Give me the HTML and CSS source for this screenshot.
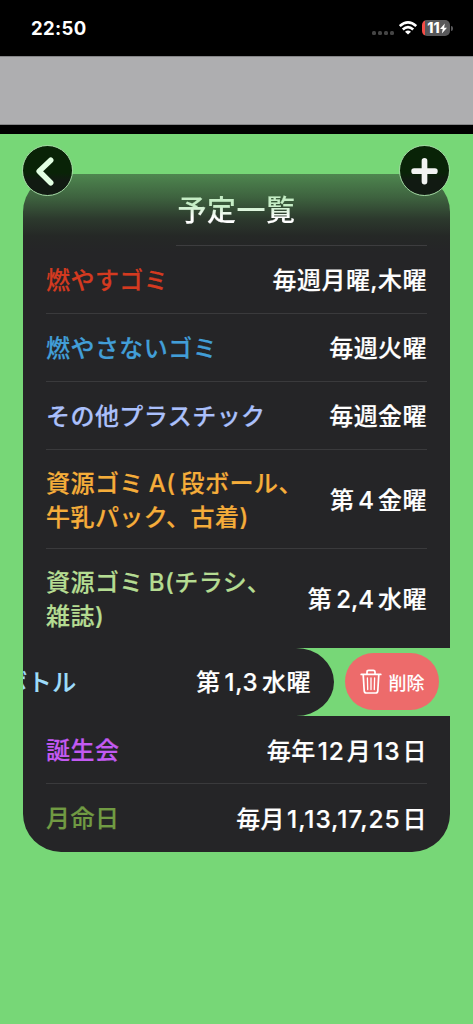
FILE: index.html
```html
<!DOCTYPE html>
<html lang="ja">
<head>
<meta charset="utf-8">
<title>予定一覧</title>
<link rel="stylesheet" href="styles.css">
</head>
<body>
<div class="screen">
  <header class="status">
    <span class="clock">22:50</span>
    <div class="indicators">
      <div class="cell"><i></i><i></i><i></i><i></i></div>
      <svg class="wifi" width="18" height="14" viewBox="0 0 18 14" fill="none" stroke="#fff" stroke-width="2.6"><path d="M.8 5.100Q9-2.300 17.200 5.100"/><path d="M3.800 8.500Q9 3.700 14.200 8.500"/><path d="M9 13.600L6 10.700Q9 8.200 12 10.700Z" fill="#fff" stroke="none"/></svg>
      <div class="battery"><span>11</span><svg width="7" height="11" viewBox="0 0 7 10" fill="#fff"><path d="M4.800 0L0 5.600h2.700L1.900 10 7 4.200H4.100z"/></svg></div>
      <i class="cap"></i>
    </div>
  </header>
  <div class="banner"></div>
  <main class="page">
    <section class="card">
      <h1 class="title"><span>予定一覧</span></h1>
      <div class="row"><span class="name red">燃やすゴミ</span><span class="when">毎週月曜,木曜</span></div>
      <div class="row"><span class="name blue">燃やさないゴミ</span><span class="when">毎週火曜</span></div>
      <div class="row"><span class="name lavender">その他プラスチック</span><span class="when">毎週金曜</span></div>
      <div class="row tall"><span class="name orange">資源ゴミ<b class="gap">A(</b><b class="gap"></b>段ボール、<br>牛乳パック、古着<b>)</b></span><span class="when">第<b class="num">4</b>金曜</span></div>
      <div class="row tall last"><span class="name lime">資源ゴミ<b class="gap">B(</b>チラシ、<br>雑誌<b>)</b></span><span class="when">第<b class="num">2,4</b>水曜</span></div>
      <div class="swipe">
        <div class="row moved"><span class="name sky">ペットボトル</span><span class="when">第<b class="num">1,3</b>水曜</span></div>
        <button class="delete"><svg width="22" height="26" viewBox="0 0 22 26" fill="none" stroke="#fff" stroke-width="1.700" stroke-linecap="round" stroke-linejoin="round"><path d="M1.200 5.400h19.600M7 5V3Q7 1.300 8.700 1.300h4.600Q15 1.300 15 3v2M3.200 5.600l1 16.200Q4.400 24 6.400 24h9.200q2 0 2.200-2.200l1-16.200"/><path d="M7.400 9l.3 11.500M11 9v11.500M14.600 9l-.3 11.500" stroke-width="1.300"/></svg><span>削除</span></button>
      </div>
      <div class="row"><span class="name purple">誕生会</span><span class="when">毎年<b class="tight">12</b>月<b class="tight">13</b>日</span></div>
      <div class="row last"><span class="name olive">月命日</span><span class="when">毎月<b class="tight">1,13,17,25</b>日</span></div>
    </section>
    <button class="round back" aria-label="戻る"><svg width="50" height="50" viewBox="0 0 50 50" fill="none" stroke="#e2ffe2" stroke-width="5.600" stroke-linecap="round" stroke-linejoin="round"><path d="M28.300 14L16.500 25.200 28.300 37"/></svg></button>
    <button class="round add" aria-label="追加"><svg width="50" height="50" viewBox="0 0 50 50" fill="none" stroke="#f1f3f1" stroke-width="5.800" stroke-linecap="round"><path d="M25 14.600v21.200M14.400 25.200h21.200"/></svg></button>
  </main>
</div>
</body>
</html>
```
FILE: styles.css
```css
* { box-sizing: border-box; }
body { margin: 0; font-family: Inter, "Noto Sans CJK JP", sans-serif; background: #000; }
button { border: 0; padding: 0; margin: 0; font: inherit; color: #fff; }
.screen { width: 473px; height: 1024px; display: flex; flex-direction: column; overflow: hidden; }
.status { height: 56px; flex: none; display: flex; justify-content: space-between; align-items: flex-start; padding: 18px 20px 0 31px; color: #fff; }
.clock { font-size: 18.500px; line-height: 21px; font-weight: 700; letter-spacing: .35px; }
.indicators { display: flex; align-items: center; height: 20px; }
.cell { display: flex; gap: 2px; padding-top: 9px; margin-right: 5px; }
.cell i { width: 4px; height: 4px; border-radius: 1.500px; background: #454545; }
.wifi { margin-right: 5px; }
.battery { width: 28px; height: 16px; border-radius: 5px; background: linear-gradient(90deg, #f34c46 3px, #58585a 3px); display: flex; align-items: center; justify-content: center; padding-left: 2px; color: #fff; font-size: 14px; font-weight: 800; line-height: 16px; }
.cap { width: 2px; height: 5px; margin-left: 1px; border-radius: 0 2px 2px 0; background: #58585a; }
.banner { height: 69px; flex: none; background: #aeaeb0; border-top: 1px solid #858587; border-bottom: 1px solid #858587; }
.page { flex: 1; margin-top: 9px; background: #77d777; padding: 40px 23px 0; position: relative; }
.card { width: 427px; border-radius: 38px; background: linear-gradient(#4e864f 0, #3e633f 23px, #2c392d 45px, #252826 62px, #252527 78px); overflow: hidden; }
.title { margin: 0; height: 72px; position: relative; text-align: center; font-size: 29px; line-height: 74px; font-weight: 500; letter-spacing: .5px; }
.title span { background: linear-gradient(#c5edc5 35%, #fff 70%); background-clip: text; -webkit-background-clip: text; color: transparent; -webkit-text-stroke: .2px transparent; }
.title::after { content: ""; position: absolute; left: 153px; right: 23px; bottom: 0; height: 1px; background: #3d3d3f; }
.row { height: 68px; margin: 0 23px; padding-top: 3px; display: flex; align-items: center; justify-content: space-between; border-bottom: 1px solid #3a3a3c; color: #fff; font-size: 24px; line-height: 34px; font-weight: 500; letter-spacing: .45px; white-space: nowrap; -webkit-text-stroke: .2px; }
.row b { font-weight: 500; }
.tall { height: 99px; padding-top: 4px; }
.last { border-color: transparent; }
.gap { margin-left: 5px; }
.num { margin: 0 4px; letter-spacing: 0; }
.moved .num { letter-spacing: .6px; }
.row .tight { margin: 0 2px; font-size: 24.500px; letter-spacing: .9px; }
.swipe { height: 68px; background: #77d777; display: flex; align-items: center; }
.moved { flex: none; width: 427px; margin: 0 11px 0 -116px; padding: 2px 23px 0; border: 0; background: #252527; border-radius: 0 38px 38px 0 / 0 34px 34px 0; }
.delete { width: 94px; height: 57px; flex: none; margin-bottom: 1px; border-radius: 29px; background: #ed6b6b; display: flex; align-items: center; justify-content: center; gap: 7px; font-size: 18px; font-weight: 500; }
.red { color: #d43a20; }
.blue { color: #429ed7; }
.lavender { color: #abc0fb; }
.orange { color: #f5ad3a; }
.lime { color: #b5dc92; }
.sky { color: #9edcfa; }
.purple { color: #c35af2; }
.olive { color: #719b43; }
.round { position: absolute; top: 11px; width: 51px; height: 51px; border-radius: 50%; border: 1px solid #a3d7a3; background: linear-gradient(#092307 55%, #111a12 70%); display: flex; align-items: center; justify-content: center; }
.back { left: 22px; }
.add { right: 23px; }
```
